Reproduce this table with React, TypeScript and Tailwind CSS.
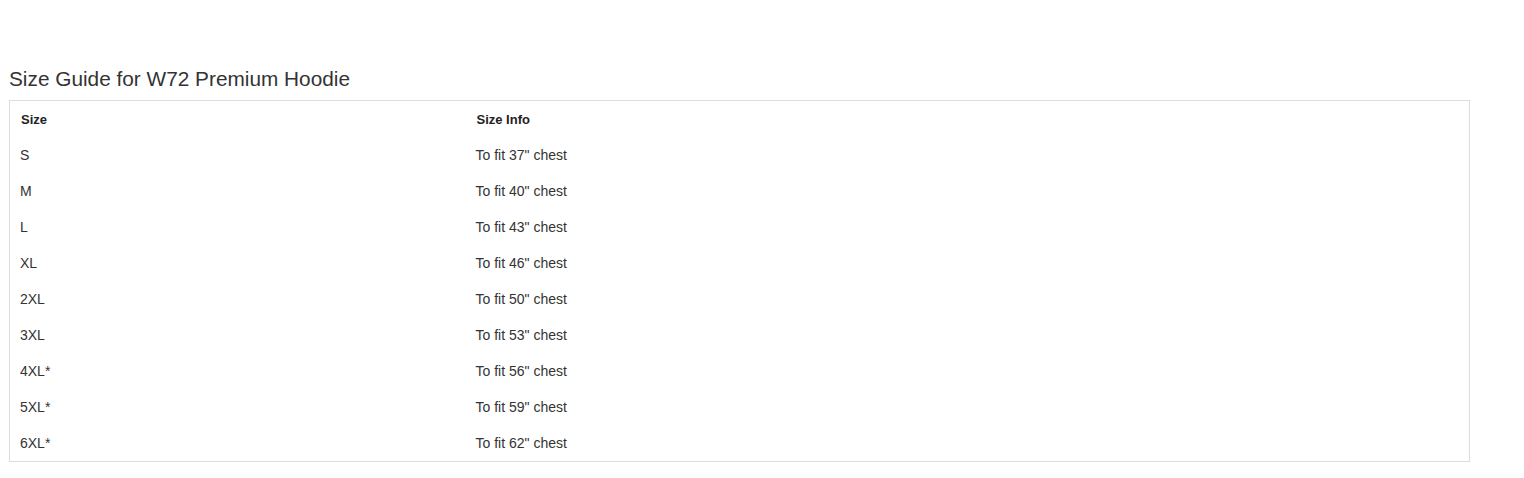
const sizes: [string, string][] = [
  ["S", "To fit 37\" chest"],
  ["M", "To fit 40\" chest"],
  ["L", "To fit 43\" chest"],
  ["XL", "To fit 46\" chest"],
  ["2XL", "To fit 50\" chest"],
  ["3XL", "To fit 53\" chest"],
  ["4XL*", "To fit 56\" chest"],
  ["5XL*", "To fit 59\" chest"],
  ["6XL*", "To fit 62\" chest"],
];

export default function App() {
  return (
    <div
      className="min-h-screen bg-white pt-[67px] pl-[9px] text-[#333]"
      style={{ fontFamily: '"Liberation Sans", Arial, sans-serif' }}>
      <h2 className="text-[20.8px] leading-[24px] mb-[9px] text-[#333]">
        Size Guide for W72 Premium Hoodie
      </h2>
      <table className="w-[1461px] border border-[#ddd] border-collapse">
        <thead>
          <tr className="h-[37px]">
            <th className="w-[456px] px-[11px] pt-[1px] text-left text-[13px] font-bold text-[#222]">
              Size
            </th>
            <th className="px-[11px] pt-[1px] text-left text-[13px] font-bold text-[#222]">
              Size Info
            </th>
          </tr>
        </thead>
        <tbody>
          {sizes.map(([size, info]) => (
            <tr key={size} className="h-[36px] text-[14px]">
              <td className="px-[10px]">{size}</td>
              <td className="px-[10px]">{info}</td>
            </tr>
          ))}
        </tbody>
      </table>
    </div>
  );
}
